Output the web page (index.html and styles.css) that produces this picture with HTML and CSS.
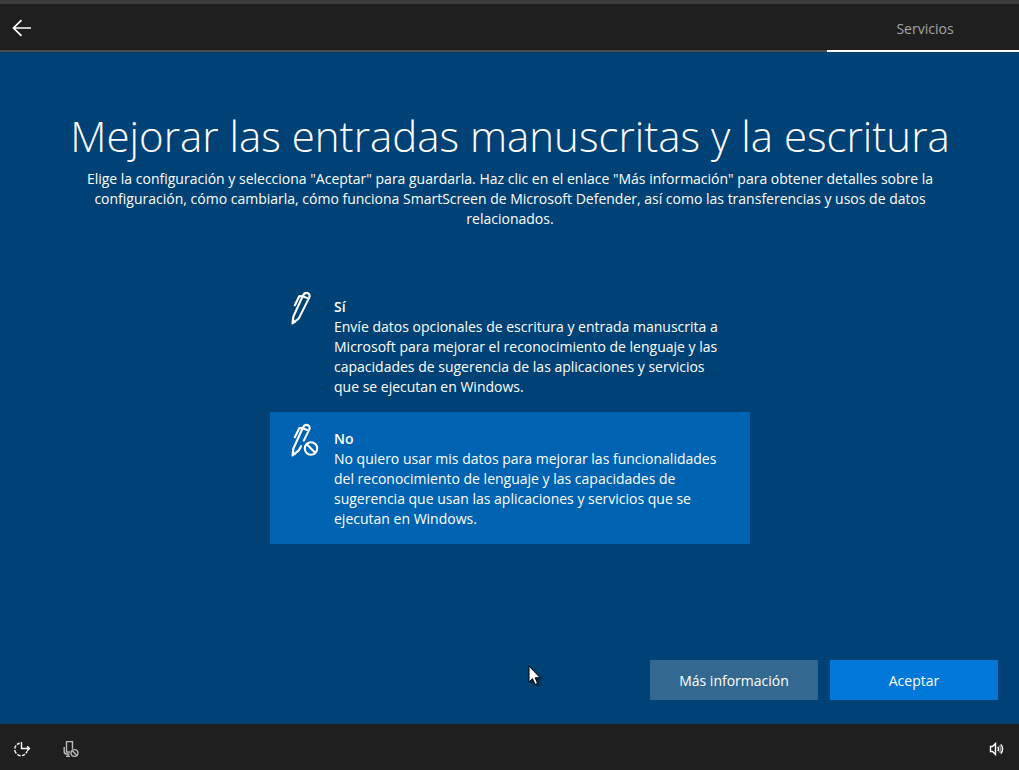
FILE: index.html
```html
<!DOCTYPE html>
<html lang="es">
<head>
<meta charset="utf-8">
<meta name="viewport" content="width=device-width, initial-scale=1">
<title>Mejorar las entradas manuscritas y la escritura</title>
<link rel="stylesheet" href="styles.css">
</head>
<body>
<header class="topbar">
  <button class="icon-button back" type="button" aria-label="Atrás">
    <svg width="20" height="18" viewBox="0 0 20 18" fill="none" stroke="currentColor" stroke-width="1.7"><path d="M19 9H1.5M9.5 1.2L1.5 9L9.5 16.8"/></svg>
  </button>
  <nav class="stages"><a class="stage" href="#servicios" aria-current="step">Servicios</a></nav>
</header>

<main class="page" id="servicios">
  <h1 class="title">Mejorar las entradas manuscritas y la escritura</h1>
  <p class="intro">Elige la configuración y selecciona "Aceptar" para guardarla. Haz clic en el enlace "Más información" para obtener detalles sobre la<br>configuración, cómo cambiarla, cómo funciona SmartScreen de Microsoft Defender, así como las transferencias y usos de datos<br>relacionados.</p>

  <form class="form">
    <div class="options" role="radiogroup" aria-label="Escritura y entrada manuscrita">
      <label class="option">
        <input class="option-input" type="radio" name="datos" value="si">
        <svg class="option-icon" width="32" height="34" viewBox="0 0 32 34" fill="none" stroke="currentColor" stroke-width="2.1" stroke-linejoin="round" stroke-linecap="round"><path d="M2.5 32.5L3.4 25.5L13 4.5Q14.6 1.2 17.6 2Q20.6 3.4 19.2 6.6L8.8 27.4ZM12.8 5.2L18.6 7.6M12.6 5.4L9.4 5L4.8 14.2M3.4 30L5 31"/></svg>
        <span class="option-text"><strong class="option-name">Sí</strong>Envíe datos opcionales de escritura y entrada manuscrita a<br>Microsoft para mejorar el reconocimiento de lenguaje y las<br>capacidades de sugerencia de las aplicaciones y servicios<br>que se ejecutan en Windows.</span>
      </label>
      <label class="option">
        <input class="option-input" type="radio" name="datos" value="no" checked>
        <svg class="option-icon" width="32" height="34" viewBox="0 0 32 34" fill="none" stroke="currentColor" stroke-width="2.1" stroke-linejoin="round" stroke-linecap="round"><path d="M13.8 17.6L19.2 6.6Q20.6 3.4 17.6 2Q14.6 1.2 13 4.5L3.4 25.5L2.5 32.5L8.8 27.4L11 23.2M12.8 5.2L18.6 7.6M12.6 5.4L9.4 5L4.8 14.2M3.4 30L5 31"/><circle cx="21" cy="25.5" r="6.2"/><path d="M16.8 21.2L25.2 29.8"/></svg>
        <span class="option-text"><strong class="option-name">No</strong>No quiero usar mis datos para mejorar las funcionalidades<br>del reconocimiento de lenguaje y las capacidades de<br>sugerencia que usan las aplicaciones y servicios que se<br>ejecutan en Windows.</span>
      </label>
    </div>
    <div class="actions">
      <button class="action" type="button">Más información</button>
      <button class="action primary" type="submit">Aceptar</button>
    </div>
  </form>
  <svg class="pointer" width="14" height="22" viewBox="0 0 14 22" aria-hidden="true"><path d="M1 1V17L4.5 13.7L7 19.5L9.6 18.4L7.2 12.8H12.2Z" fill="#fff" stroke="#000"/></svg>
</main>

<footer class="bottombar">
  <div class="tools">
    <button class="icon-button" type="button" aria-label="Accesibilidad">
      <svg width="18" height="16" viewBox="0 0 18 16" fill="none" stroke="currentColor" stroke-width="1.4"><path d="M8.5 1V7.5H16.2M14.2 5.2L16.5 7.5L14.2 9.8"/><path d="M6.6 2.2A6.4 6.4 0 0 0 4 3.6M3.2 4.4A6.4 6.4 0 0 0 1.7 7.6M1.7 9A6.4 6.4 0 0 0 3.4 12.6M4.4 13.5A6.4 6.4 0 0 0 7.6 14.7M9 14.6A6.4 6.4 0 0 0 12 13.3M12.9 12.3A6.4 6.4 0 0 0 14 10.2"/></svg>
    </button>
    <button class="icon-button muted" type="button" aria-label="Micrófono desactivado">
      <svg width="16" height="18" viewBox="0 0 16 18" fill="none" stroke="currentColor" stroke-width="1.4"><path d="M9.5 9V1.6H3.5V12H7M1.2 7V11.5Q1.2 14 3.5 14H6.5M5 14V16.4M3 16.4H7"/><circle cx="11.5" cy="13" r="3.4"/><path d="M9.1 10.6L13.9 15.4"/></svg>
    </button>
  </div>
  <button class="icon-button" type="button" aria-label="Volumen">
    <svg width="16" height="14" viewBox="0 0 16 14" fill="none" stroke="currentColor" stroke-width="1.4"><path d="M1.5 4.5H3.5L6.5 1.5V12.5L3.5 9.5H1.5ZM8.8 4.8Q10.2 7 8.8 9.2M11.8 2.4Q15.4 7 11.8 11.6"/><path d="M10.4 3.4Q12.7 7 10.4 10.6" stroke-opacity=".5"/></svg>
  </button>
</footer>
</body>
</html>
```
FILE: styles.css
```css
* { box-sizing: border-box; }

body {
  margin: 0;
  min-height: 100vh;
  display: flex;
  flex-direction: column;
  background: #004275;
  color: #fff;
  font: 14px/20px "Segoe UI", "Open Sans", "Noto Sans", sans-serif;
}

button { font: inherit; color: inherit; border: 0; }

.topbar {
  display: flex;
  justify-content: space-between;
  height: 52px;
  background: #1f1f1f;
  border-top: 4px solid #3b3b3d;
  border-bottom: 2px solid #4b4b4b;
}

.icon-button {
  display: flex;
  align-items: center;
  justify-content: center;
  padding: 0;
  width: 44px;
  background: transparent;
}

.back { padding-top: 2px; }

.muted { color: #b8b8b8; }

.stages { display: flex; width: 192px; margin-bottom: -2px; }

.stage {
  flex: 1;
  display: flex;
  align-items: center;
  justify-content: center;
  padding: 4px 0 0 4px;
  border-bottom: 2px solid #fff;
  color: #a5a5a5;
  text-decoration: none;
}

.page {
  position: relative;
  flex: 1;
  display: flex;
  flex-direction: column;
  padding: 54px 21px 24px 22px;
}

.title {
  margin: 0 0 3px;
  font-size: 42px;
  line-height: 60px;
  font-weight: 300;
  text-align: center;
}

.intro { margin: 0; text-align: center; }

.form { flex: 1; display: flex; flex-direction: column; margin-top: 51px; }

.options { width: 100%; max-width: 480px; margin: 0 auto; }

.option {
  position: relative;
  display: flex;
  gap: 12px;
  padding: 17px 20px 15px;
}

.option:has(:checked) { background: #0063b1; }

.option-input { position: absolute; opacity: 0; margin: 0; }

.option-icon { flex: none; margin-top: -6px; }

.option-text { flex: 1; white-space: nowrap; }

.option-name { display: block; font-weight: 600; }

.actions {
  display: flex;
  justify-content: flex-end;
  gap: 12px;
  margin-top: auto;
}

.action { width: 168px; height: 40px; padding: 2px 0 0; background: #336891; }

.primary { background: #0078d9; }

.pointer {
  position: absolute;
  left: 528px;
  top: 613px;
  filter: drop-shadow(2px 2px 1px rgba(0, 0, 0, 0.4));
}

.bottombar {
  display: flex;
  justify-content: space-between;
  height: 46px;
  padding-top: 4px;
  background: #1f1f1f;
}

.tools { display: flex; gap: 5px; }
```
